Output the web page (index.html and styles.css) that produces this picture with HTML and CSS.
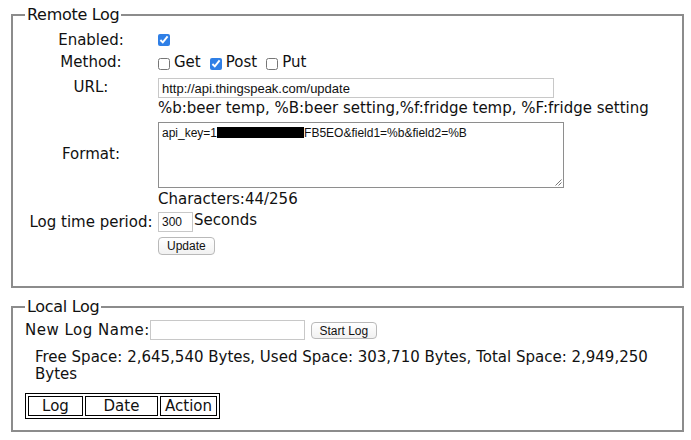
FILE: index.html
```html
<!DOCTYPE html>
<html>
<head>
<meta charset="utf-8">
<link rel="stylesheet" href="styles.css">
</head>
<body>
<div class="page">
  <fieldset class="panel remote">
    <legend>Remote Log</legend>
    <div class="form-grid">
      <div class="lbl">Enabled:</div>
      <div class="val"><input type="checkbox" class="cb" checked></div>

      <div class="lbl">Method:</div>
      <div class="val methods">
        <label class="opt"><input type="checkbox" class="cb">Get</label>
        <label class="opt"><input type="checkbox" class="cb" checked>Post</label>
        <label class="opt"><input type="checkbox" class="cb">Put</label>
      </div>

      <div class="lbl">URL:</div>
      <div class="val url-row"><input type="text" class="field url" value="http://api.thingspeak.com/update"></div>

      <div class="lbl">Format:</div>
      <div class="val format">
        <div class="hint">%b:beer temp, %B:beer setting,%f:fridge temp, %F:fridge setting</div>
        <div class="textarea">api_key=1<span class="redact"></span>FB5EO&amp;field1=%b&amp;field2=%B<svg class="grip" width="9" height="9" viewBox="0 0 9 9"><path d="M8.5 2.5 L2.5 8.5 M8.5 5.5 L5.5 8.5" stroke="#777" stroke-width="1" fill="none"/></svg></div>
        <div class="count">Characters:44/256</div>
      </div>

      <div class="lbl">Log time period:</div>
      <div class="val period-row"><input type="text" class="field period" value="300"><span>Seconds</span></div>

      <div class="lbl"></div>
      <div class="val btn-row"><button class="btn">Update</button></div>
    </div>
  </fieldset>

  <fieldset class="panel local">
    <legend>Local Log</legend>
    <div class="newlog">
      <span class="newlog-label">New Log Name:</span><input type="text" class="field logname"><button class="btn start">Start Log</button>
    </div>
    <p class="space">Free Space: 2,645,540 Bytes, Used Space: 303,710 Bytes, Total Space: 2,949,250 Bytes</p>
    <table class="logs">
      <tr><th class="c-log">Log</th><th class="c-date">Date</th><th class="c-action">Action</th></tr>
    </table>
  </fieldset>
</div>
</body>
</html>
```

FILE: styles.css
```css
html, body {
  margin: 0;
  background: #fff;
}
body {
  font-family: "DejaVu Sans", "Liberation Sans", sans-serif;
  font-size: 15px;
  color: #111;
}
.page {
  padding: 5px 7px 0 11px;
}
.panel {
  margin: 0;
  border: 2px solid #8c8c8c;
  padding: 0 12px;
}
.panel legend {
  padding: 0 2px;
  line-height: 19px;
  font-size: 16px;
  letter-spacing: -0.3px;
}
.remote {
  padding-top: 5px;
  padding-bottom: 28px;
}
.local {
  margin-top: 9px;
  padding-top: 3px;
  padding-bottom: 11px;
}
.form-grid {
  display: grid;
  grid-template-columns: 132px 1fr;
  grid-template-rows: 22px 22px 27px auto 28px 22px;
  column-gap: 1px;
}
.lbl {
  text-align: center;
  align-self: center;
  line-height: 18px;
}
.val {
  display: flex;
  align-items: center;
  line-height: 17px;
}
.cb {
  width: 12px;
  height: 12px;
  margin: 0;
  accent-color: #2f7fe6;
}
.methods {
  gap: 9px;
}
.opt {
  display: flex;
  align-items: center;
  gap: 4px;
}
.opt .cb {
  margin-top: 3px;
}
.field {
  font-family: "Liberation Sans", Arial, sans-serif;
  font-size: 13px;
  border: 1px solid #c8c8c8;
  padding: 0 3px;
  margin: 0;
  height: 20px;
  box-sizing: border-box;
  color: #111;
  outline: none;
}
.url-row {
  align-items: flex-end;
  padding-bottom: 2px;
}
.url {
  width: 396px;
}
.format {
  flex-direction: column;
  align-items: flex-start;
}
.hint {
  line-height: 17px;
  white-space: nowrap;
}
.textarea {
  position: relative;
  margin-top: 5px;
  width: 406px;
  height: 66px;
  box-sizing: border-box;
  border: 1px solid #8e8e8e;
  padding: 3px 3px;
  font-family: "Liberation Sans", Arial, sans-serif;
  font-size: 12px;
  line-height: 14px;
}
.redact {
  display: inline-block;
  width: 87px;
  height: 11px;
  background: #000;
  vertical-align: -1px;
}
.grip {
  position: absolute;
  right: 1px;
  bottom: 1px;
}
.count {
  margin-top: 2px;
  line-height: 18px;
}
.period-row span {
  margin-left: 1px;
  margin-top: -3px;
}
.period {
  width: 35px;
  font-size: 12px;
  padding: 0 3px;
}
.btn-row {
  align-items: flex-start;
  padding-top: 1px;
}
.btn {
  font-family: "Liberation Sans", Arial, sans-serif;
  font-size: 12px;
  color: #111;
  background: linear-gradient(#ffffff, #f1f1f1);
  border: 1px solid #b9b9b9;
  border-radius: 4px;
  height: 18px;
  padding: 0 8px;
  margin: 0;
  line-height: 16px;
}
.newlog {
  display: flex;
  align-items: center;
  height: 22px;
}
.newlog-label {
  letter-spacing: 0.5px;
}
.logname {
  width: 155px;
}
.start {
  margin-left: 6px;
  width: 66px;
  height: 17px;
  padding: 0;
}
.space {
  margin: 8px 0 0 0;
  padding-left: 10px;
  line-height: 17px;
}
.logs {
  margin-top: 10px;
  border: 1px solid #000;
  border-spacing: 2px;
}
.logs th {
  border: 1px solid #000;
  font-weight: normal;
  padding: 0;
  height: 20px;
  line-height: 17px;
  box-sizing: border-box;
}
.c-log { width: 55px; }
.c-date { width: 73px; }
.c-action { width: 57px; }
```
